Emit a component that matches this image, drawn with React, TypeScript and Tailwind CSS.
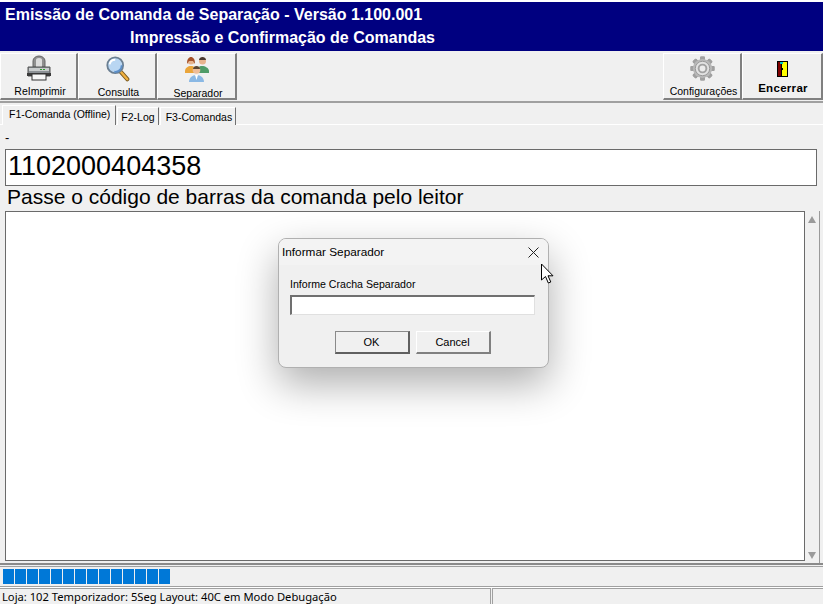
import React from 'react';

const ui = "font-['Liberation_Sans',sans-serif]";

function PrinterIcon() {
  return (
    <svg width="26" height="26" viewBox="0 0 26 26">
      <path d="M7 12V6a6 5 0 0 1 12 0v6z" fill="#8f8f8f" stroke="#666" strokeWidth="1" />
      <path d="M10 12V5a3 2 0 0 1 6 0v7z" fill="#dcdcdc" />
      <path d="M2 12h22v9H2z" fill="#8b9094" stroke="#555" strokeWidth="1" />
      <rect x="3" y="13" width="20" height="3" fill="#c9cccd" />
      <rect x="14" y="14" width="2" height="1" fill="#2f9a2f" />
      <rect x="17" y="14" width="2" height="1" fill="#2f9a2f" />
      <rect x="1" y="18" width="24" height="3" fill="#3a3a3a" />
      <rect x="6" y="19" width="14" height="6" fill="#f7f7f7" stroke="#333" strokeWidth="1" />
    </svg>
  );
}

function SearchIcon() {
  return (
    <svg width="26" height="26" viewBox="0 0 26 28" className="ml-[2px] mt-[1px]">
      <path d="M16 17l7 8" stroke="#7a5a20" strokeWidth="4.5" strokeLinecap="round" />
      <path d="M16 17l7 8" stroke="#f0b040" strokeWidth="2.500" strokeLinecap="round" />
      <circle cx="10" cy="10" r="8.500" fill="#b9d6f2" stroke="#6b7f92" strokeWidth="2" />
      <path d="M4 9a6 6 0 0 1 6-5" stroke="#fff" strokeWidth="2" fill="none" />
      <path d="M9 17a7 7 0 0 0 8-7" stroke="#5b8fca" strokeWidth="2" fill="none" />
    </svg>
  );
}

function PeopleIcon() {
  return (
    <svg width="26" height="28" viewBox="0 0 26 28">
      <path d="M1 16c0-3 3-5 6-5s5 2 5 5v2H1z" fill="#eaa53a" />
      <circle cx="7" cy="6" r="3.500" fill="#e7b48e" />
      <path d="M3 9c0-5 2-7 4-7s4 2 4 7l-2-3H5z" fill="#a4512a" />
      <path d="M13 16c0-3 2-5 5-5s7 2 7 5v2H13z" fill="#4f9c68" />
      <circle cx="18.500" cy="6" r="3.500" fill="#e7b48e" />
      <path d="M15 5c0-2 2-3 3.500-3S22 3 22 5z" fill="#4a3a30" />
      <path d="M5 27c0-4 3-7 7.500-7S20 23 20 27z" fill="#8ab8e4" />
      <path d="M11 20h3l-1.500 5z" fill="#fff" />
      <circle cx="12.500" cy="15" r="3.800" fill="#eebd98" />
      <path d="M9 14c0-2 2-3 3.500-3S16 12 16 14z" fill="#5a4634" />
    </svg>
  );
}

function GearIcon() {
  return (
    <svg width="25" height="25" viewBox="0 0 26 26">
      <g fill="#a0a0a0">
        {[0, 45, 90, 135, 180, 225, 270, 315].map((a) => (
          <rect key={a} x="10.500" y="0.500" width="5" height="25" rx="1" transform={`rotate(${a} 13 13)`} />
        ))}
      </g>
      <circle cx="13" cy="13" r="10" fill="#b8b8b8" />
      <circle cx="13" cy="13" r="7.500" fill="#e2e2e2" stroke="#979797" strokeWidth="1" />
      <circle cx="13" cy="13" r="5" fill="#a2a2a2" />
      <circle cx="13" cy="13" r="3" fill="#ececec" />
    </svg>
  );
}

function DoorIcon() {
  return (
    <svg width="11" height="16" viewBox="0 0 11 16" shapeRendering="crispEdges">
      <rect width="11" height="16" fill="#000" />
      <rect x="1" y="1" width="4" height="14" fill="#800000" />
      <rect x="5" y="1" width="5" height="14" fill="#ffff00" />
      <rect x="3" y="1" width="3" height="2" fill="#00c8c8" />
      <rect x="4" y="3" width="1" height="12" fill="#000" />
      <rect x="5" y="7" width="1" height="2" fill="#000" />
    </svg>
  );
}

function ToolButton({ label, width, icon, bold }: { label: string; width: string; icon: React.ReactNode; bold?: boolean }) {
  return (
    <div className={`${width} h-[47px] bg-[#f0f0f0] border-t border-l border-white border-r-2 border-b-2 border-r-[#808080] border-b-[#808080] flex flex-col items-center shrink-0`}>
      <div className="h-[28px] mt-[1px] flex items-center justify-center">{icon}</div>
      <span className={bold ? "text-[11.500px] font-bold leading-[14px] mt-[-2px] pl-[2px] tracking-[0.3px]" : "text-[10.500px] leading-[14px] mt-[3px] pl-[3px] whitespace-nowrap"}>{label}</span>
    </div>
  );
}

function Tab({ label, active, pad }: { label: string; active?: boolean; pad: string }) {
  return (
    <div className={active
      ? `h-[20px] ${pad} bg-[#f0f0f0] border-t border-l border-white border-r border-r-[#707070] text-[10.500px] leading-[17px] whitespace-nowrap`
      : `h-[18px] mt-[2px] ${pad} bg-[#f0f0f0] border-t border-l border-white border-r border-r-[#707070] text-[10.500px] leading-[19px] whitespace-nowrap`}>
      {label}
    </div>
  );
}

export default function App() {
  return (
    <div className={`${ui} relative w-[823px] h-[604px] overflow-hidden bg-[#f0f0f0] text-black flex flex-col`}>
      <div className="h-[2px] bg-white shrink-0" />
      <div className="h-[49px] bg-[#000080] text-white font-bold text-[16px] shrink-0">
        <div className="pl-[5px] pt-[4px] leading-[18px]">Emissão de Comanda de Separação - Versão 1.100.001</div>
        <div className="pl-[130px] pt-[5px] leading-[18px]">Impressão e Confirmação de Comandas</div>
      </div>

      {/* barra de botoes */}
      <div className="h-[52px] pt-[2px] flex border-b-2 border-[#a0a0a0] shrink-0">
        <ToolButton label="ReImprimir" width="w-[78px]" icon={<PrinterIcon />} />
        <ToolButton label="Consulta" width="w-[79px]" icon={<SearchIcon />} />
        <ToolButton label="Separador" width="w-[80px]" icon={<PeopleIcon />} />
        <div className="flex-1" />
        <ToolButton label="Configurações" width="w-[79px]" icon={<GearIcon />} />
        <ToolButton label="Encerrar" width="w-[81px]" icon={<DoorIcon />} bold />
      </div>

      <div className="h-[20px] mt-[2px] pl-[2px] flex gap-[1px] border-b border-white shrink-0">
        <Tab label="F1-Comanda (Offline)" active pad="pl-[6px] pr-[5px]" />
        <Tab label="F2-Log" pad="pl-[3px] pr-[3px]" />
        <Tab label="F3-Comandas" pad="pl-[5px] pr-[3px]" />
      </div>

      {/* area da comanda */}
      <div className="h-[440px] shrink-0 pl-[5px] pr-[3px] flex flex-col border-b-2 border-[#8a8a8a]">
        <div className="h-[24px] text-[13px] leading-[26px]">-</div>
        <div className="h-[37px] mr-[3px] bg-white border border-[#6a6a6a] text-[27px] leading-[33px] pl-[2px]">1102000404358</div>
        <div className="h-[25px] pl-[2px] text-[21px] leading-[21px] whitespace-nowrap">Passe o código de barras da comanda pelo leitor</div>
        <div className="flex-1 flex min-h-0 border-r border-[#9a9a9a]">
          <div className="w-[800px] mb-[2px] bg-white border border-[#6a6a6a]" />
          <div className="flex-1 flex flex-col justify-between items-center pt-[5px] pb-[4px]">
            <div className="w-0 h-0 border-x-[4px] border-x-transparent border-b-[7px] border-b-[#9a9a9a]" />
            <div className="w-0 h-0 border-x-[4px] border-x-transparent border-t-[7px] border-t-[#9a9a9a]" />
          </div>
        </div>
      </div>

      {/* progresso */}
      <div className="h-[21px] mt-[1px] pl-[3px] pt-[2px] flex gap-[1px] border-t border-b border-[#a0a0a0] shrink-0">
        {Array.from({ length: 14 }).map((_, i) => (
          <div key={i} className="w-[11px] h-[15px] bg-[#0078d7]" />
        ))}
      </div>

      <div className="flex-1 min-h-0 flex border-t border-white font-['Noto_Sans',sans-serif] text-[11.200px] leading-[15px]">
        <div className="w-[491px] pl-[2px] border-t border-[#a0a0a0] border-r whitespace-nowrap overflow-hidden">Loja: 102 Temporizador: 5Seg Layout: 40C em Modo Debugação</div>
        <div className="flex-1 ml-[1px] border-t border-l border-[#a0a0a0]" />
      </div>

      {/* dialogo */}
      <div className="absolute left-[278px] top-[238px] w-[271px] h-[130px] rounded-[8px] bg-[#f0f0f0] border border-[#b0b0b0] shadow-[0_16px_40px_rgba(0,0,0,0.32)] overflow-hidden">
        <div className="h-[26px] pt-[1px] bg-[#f3f3f3] flex items-center justify-between pl-[3px] pr-[9px] text-[11.800px]">
          <span>Informar Separador</span>
          <svg width="11" height="11" viewBox="0 0 11 11"><path d="M0.500 0.500l10 10M10.500 0.500l-10 10" stroke="#222" strokeWidth="1" /></svg>
        </div>
        <div className="px-[11px] pt-[12px]">
          <div className="text-[10.600px] leading-[14px]">Informe Cracha Separador</div>
          <div className="h-[20px] mt-[4px] w-[245px] bg-white border-t-2 border-l-2 border-[#707070] border-r border-b border-r-[#e0e0e0] border-b-[#e0e0e0]" />
          <div className="mt-[16px] flex justify-center gap-[6px] pr-[2px] text-[11px]">
            <div className="w-[75px] h-[23px] flex items-center justify-center border border-t-[#8a8a8a] border-l-[#8a8a8a] border-r-2 border-b-2 border-r-[#606060] border-b-[#606060]">OK</div>
            <div className="w-[75px] h-[23px] flex items-center justify-center border-t border-l border-t-white border-l-white border-r-2 border-b-2 border-r-[#808080] border-b-[#808080]">Cancel</div>
          </div>
        </div>
      </div>

      {/* cursor */}
      <svg className="absolute left-[540px] top-[263px]" width="14" height="22" viewBox="0 0 14 22">
        <path d="M1.500 1v16l4-3.500 2.800 6.500 2.500-1-2.800-6.200h5z" fill="#fff" stroke="#000" strokeWidth="1" />
      </svg>
    </div>
  );
}
